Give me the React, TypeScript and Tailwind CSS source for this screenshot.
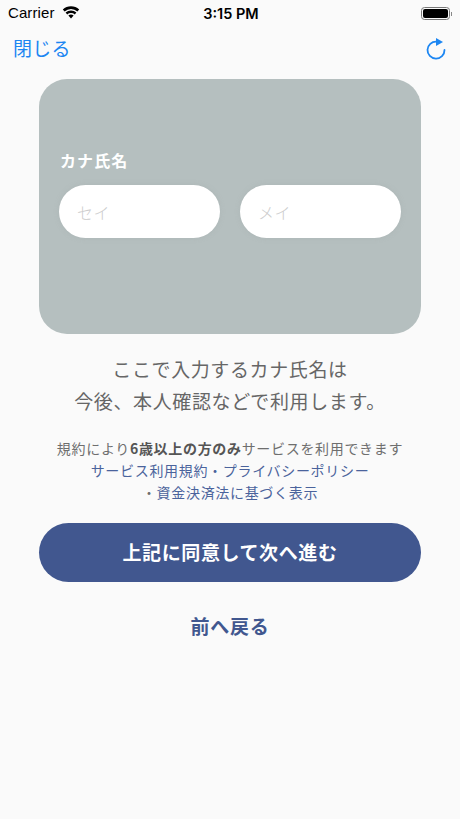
const jp = "font-['Noto_Sans_CJK_JP','Noto_Sans',sans-serif]";

function Wifi() {
  return (
    <svg width="18" height="13" viewBox="0 0 18 13" className="ml-[7px] -mt-[2px]">
      <path d="M9 12.6 L6.4 9.6 A4 4 0 0 1 11.6 9.6 Z" fill="#000" />
      <path d="M5.2 8.4 L3.6 6.6 A8 8 0 0 1 14.4 6.6 L12.8 8.4 A5.6 5.6 0 0 0 5.2 8.4 Z" fill="#000" />
      <path d="M2.6 5.4 L0.8 3.5 A12 12 0 0 1 17.2 3.5 L15.4 5.4 A9.4 9.4 0 0 0 2.6 5.4 Z" fill="#000" />
    </svg>
  );
}

function Battery() {
  return (
    <div className="flex items-center">
      <div className="w-[29px] h-[13px] rounded-[3.5px] border border-[#777] p-[1px]">
        <div className="w-full h-full rounded-[2px] bg-black" />
      </div>
      <div className="w-[1px] h-[4px] bg-[#888] ml-[1px]" />
    </div>
  );
}

function Reload() {
  return (
    <svg width="22" height="24" viewBox="0 0 22 24" fill="none">
      <path d="M11.5 4.6 A8.5 8.5 0 1 0 19.5 13" stroke="#1c86f2" strokeWidth="1.8" strokeLinecap="round" />
      <path d="M11 1 L18 5 L11 9 Z" fill="#1c86f2" />
    </svg>
  );
}

function Field({ placeholder }: { placeholder: string }) {
  return (
    <div className="flex-1 h-[53px] rounded-full bg-white shadow-[0_0_5px_rgba(170,180,180,0.8)] flex items-center pl-[18px] text-[16px] text-[#cccccc] font-light tracking-[0.6px]">
      {placeholder}
    </div>
  );
}

export default function App() {
  return (
    <div className={`w-[460px] h-[819px] bg-[#fafafa] overflow-hidden flex flex-col ${jp}`}>
      <div className="h-[27px] flex items-center justify-between relative pl-[8px] pr-[8px] font-['Liberation_Sans',sans-serif] text-black">
        <div className="flex items-center text-[15px] tracking-[0.1px]">
          Carrier
          <Wifi />
        </div>
        <div className="absolute left-[2px] right-0 text-center text-[14.5px] font-semibold font-['Inter',sans-serif]">3:15 PM</div>
        <Battery />
      </div>
      <div className="h-[52px] flex items-start justify-between px-[13px]">
        <span className="text-[19px] leading-[24px] mt-[9px] tracking-[0.3px] text-[#1c86f2]">閉じる</span>
        <span className="mt-[10px]"><Reload /></span>
      </div>
      <div className="mx-[39px] h-[255px] rounded-[28px] bg-[#b5bfbf] px-[20px] pt-[70px]">
        <div className="text-[16px] leading-[22px] ml-[1px] tracking-[1.1px] font-bold text-white">カナ氏名</div>
        <div className="flex gap-[20px] mt-[14px]">
          <Field placeholder="セイ" />
          <Field placeholder="メイ" />
        </div>
      </div>
      <div className="mt-[19px] text-center text-[19px] leading-[32px] tracking-[0.62px] text-[#666]">
        <p>ここで入力するカナ氏名は</p>
        <p>今後、本人確認などで利用します。</p>
      </div>
      <div className="mt-[20px] text-center text-[14px] leading-[22px] tracking-[0.68px] text-[#6e6e6e]">
        <p>規約により<b className="font-bold text-[#555]">6歳以上の方のみ</b>サービスを利用できます</p>
        <p className="text-[#4a639c]">サービス利用規約・プライバシーポリシー</p>
        <p className="text-[#4a639c]"><span className="text-[#6e6e6e]">・</span>資金決済法に基づく表示</p>
      </div>
      <div className="mx-[39px] mt-[20px] h-[59px] rounded-full bg-[#41578f] flex items-center justify-center text-white text-[19px] tracking-[0.6px] font-bold">
        上記に同意して次へ進む
      </div>
      <div className="mt-[29px] text-center text-[19px] leading-[30px] tracking-[0.7px] font-bold text-[#41578f]">前へ戻る</div>
    </div>
  );
}
